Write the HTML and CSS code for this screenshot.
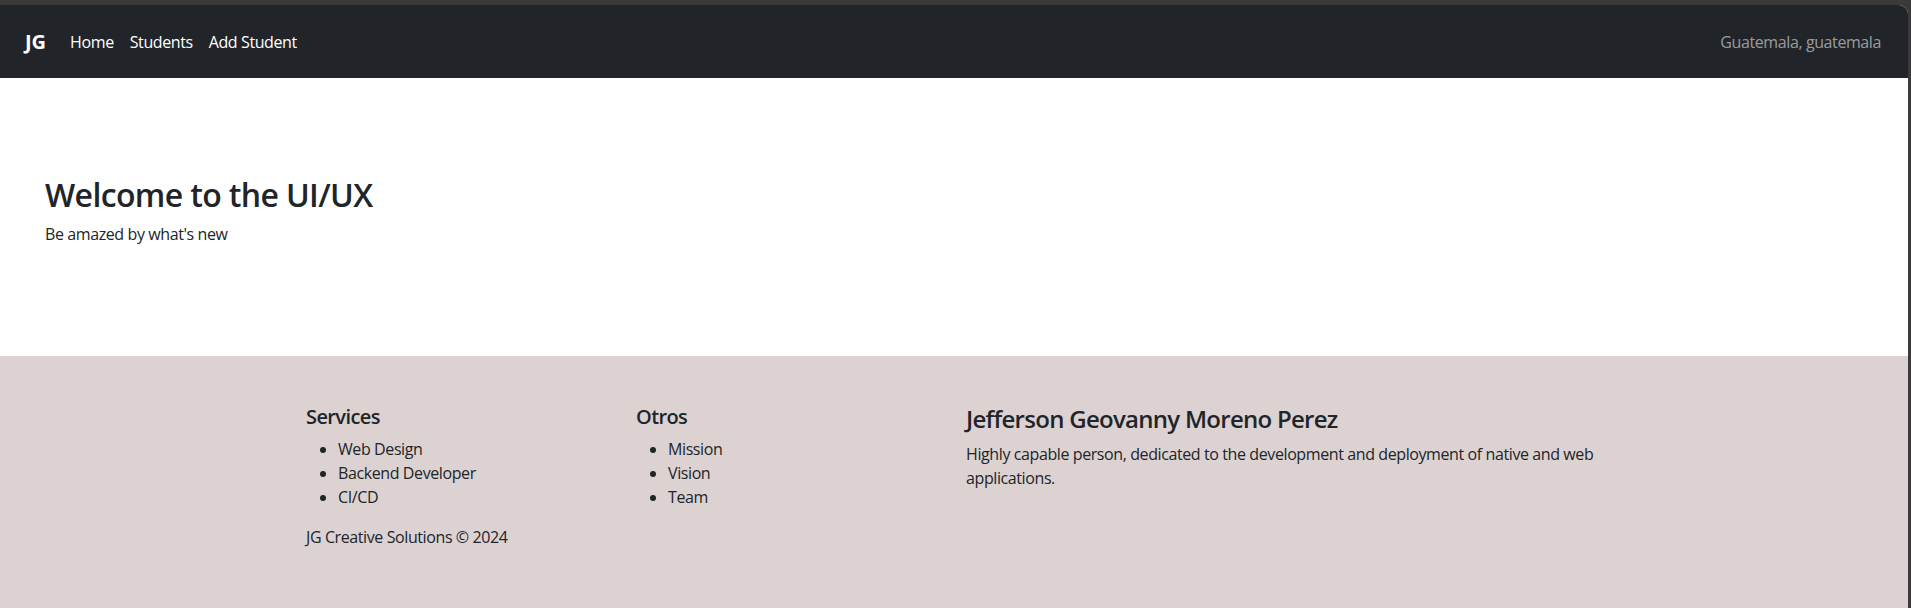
FILE: index.html
```html
<!DOCTYPE html>
<html lang="en">
<head>
<meta charset="utf-8">
<title>JG</title>
<link rel="stylesheet" href="styles.css">
</head>
<body>
<div class="window">
  <nav class="navbar">
    <div class="nav-left">
      <a class="brand" href="#">JG</a>
      <ul class="nav-links">
        <li><a href="#">Home</a></li>
        <li><a href="#">Students</a></li>
        <li><a href="#">Add Student</a></li>
      </ul>
    </div>
    <span class="nav-text">Guatemala, guatemala</span>
  </nav>
  <section class="hero">
    <h1 class="hero-title">Welcome to the UI/UX</h1>
    <p class="hero-sub">Be amazed by what's new</p>
  </section>
  <footer class="footer">
    <div class="container">
      <div class="col col-3">
        <h5 class="col-title">Services</h5>
        <ul class="list">
          <li>Web Design</li>
          <li>Backend Developer</li>
          <li>CI/CD</li>
        </ul>
        <p class="copy">JG Creative Solutions © 2024</p>
      </div>
      <div class="col col-3">
        <h5 class="col-title">Otros</h5>
        <ul class="list">
          <li>Mission</li>
          <li>Vision</li>
          <li>Team</li>
        </ul>
      </div>
      <div class="col col-6">
        <h4 class="name">Jefferson Geovanny Moreno Perez</h4>
        <p class="bio">Highly capable person, dedicated to the development and deployment of native and web applications.</p>
      </div>
    </div>
  </footer>
</div>
</body>
</html>
```
FILE: styles.css
```css
* { box-sizing: border-box; }
html, body { margin: 0; padding: 0; }
body {
  background: #3a3a3a;
  font-family: "Open Sans", "Noto Sans", sans-serif;
  font-size: 16px;
  line-height: 1.5;
  letter-spacing: -0.025em;
  color: #212529;
  height: 608px;
  overflow: hidden;
}
.window {
  margin-top: 5px;
  margin-right: 3px;
  border-top-right-radius: 9px;
  overflow: hidden;
  background: #fff;
  height: 603px;
  display: flex;
  flex-direction: column;
}
.navbar {
  background: #212529;
  height: 73px;
  display: flex;
  align-items: center;
  justify-content: space-between;
  padding: 0 27px 0 25px;
  flex-shrink: 0;
}
.nav-left { display: flex; align-items: center; }
.brand {
  color: #fff;
  text-decoration: none;
  font-size: 20px;
  font-weight: 700;
  letter-spacing: 0;
  margin-right: 16px;
}
.nav-links { display: flex; list-style: none; margin: 0; padding: 0; }
.nav-links a {
  display: block;
  color: #fff;
  text-decoration: none;
  padding: 8px;
}
.nav-text { color: rgba(255,255,255,.55); }
.hero {
  padding: 98px 45px 0;
  height: 278px;
  flex-shrink: 0;
}
.hero-title {
  margin: 0 0 8px;
  font-size: 32px;
  font-weight: 600;
  line-height: 1.2;
  letter-spacing: -0.02em;
}
.hero-sub { margin: 0; }
.footer {
  background: #dcd2d2;
  flex: 1;
  padding-top: 49px;
}
.container {
  width: 1320px;
  margin: 0 auto;
  display: flex;
}
.col { padding: 0 12px; }
.col-3 { width: 330px; }
.col-6 { width: 660px; }
.col-title {
  margin: 0 0 8px;
  font-size: 20px;
  font-weight: 600;
  line-height: 1.2;
  letter-spacing: -0.03em;
}
.list { margin: 0 0 16px; padding-left: 32px; }
.copy { margin: 0; }
.name {
  margin: 0 0 8px;
  font-size: 24px;
  font-weight: 600;
  line-height: 1.2;
  letter-spacing: -0.03em;
}
.bio { margin: 0; }
```
